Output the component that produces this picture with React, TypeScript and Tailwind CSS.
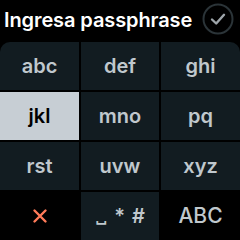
const keys = ["abc", "def", "ghi", "jkl", "mno", "pq", "rst", "uvw", "xyz"];

export default function App() {
    const selected = "jkl";

    return (
        <main className="w-[240px] h-[240px] bg-black flex flex-col overflow-hidden" style={{ fontFamily: "Inter, 'Noto Sans', sans-serif" }}>
            <div className="h-[42px] flex items-center justify-between pl-[4px] pr-[6px]">
                <h1 className="text-[20px] font-semibold text-white tracking-[-0.1px] mt-[-3px] whitespace-nowrap">Ingresa passphrase</h1>
                <svg width="32" height="32" viewBox="0 0 32 32" className="shrink-0 mt-[-4px]">
                    <circle cx="16" cy="16" r="14.5" fill="none" stroke="#2b3438" strokeWidth="2" />
                    <path d="M10 16.5 L14.2 20.5 L22 11.8" fill="none" stroke="#9ea5aa" strokeWidth="2.4" strokeLinecap="round" strokeLinejoin="round" />
                </svg>
            </div>
            <div className="grid grid-cols-[79px_78px_79px] grid-rows-4 gap-[2px] flex-1 rounded-t-[10px] overflow-hidden">
                {keys.map((k) => (
                    <div key={k}
                        className={k === selected
                            ? "flex items-center justify-center bg-[#c7ced4] text-black text-[20px] font-semibold"
                            : "flex items-center justify-center bg-[#121c21] text-[#c0c8cd] text-[20px] font-semibold"}>
                        {k}
                    </div>
                ))}
                <div className="flex items-center justify-center bg-black">
                    <svg width="16" height="16" viewBox="0 0 16 16">
                        <path d="M2.5 2.5 L13.5 13.5 M13.5 2.5 L2.5 13.5" stroke="#ff7b59" strokeWidth="2.4" strokeLinecap="round" />
                    </svg>
                </div>
                <div className="flex items-center justify-center bg-[#121c21] text-[#c0c8cd] text-[20px] font-semibold gap-[7px]">
                    <span className="text-[16px]">␣</span><span>*</span><span>#</span>
                </div>
                <div className="flex items-center justify-center bg-black text-[#c0c8cd] text-[21px] font-medium">
                    ABC
                </div>
            </div>
        </main>
    )
}
